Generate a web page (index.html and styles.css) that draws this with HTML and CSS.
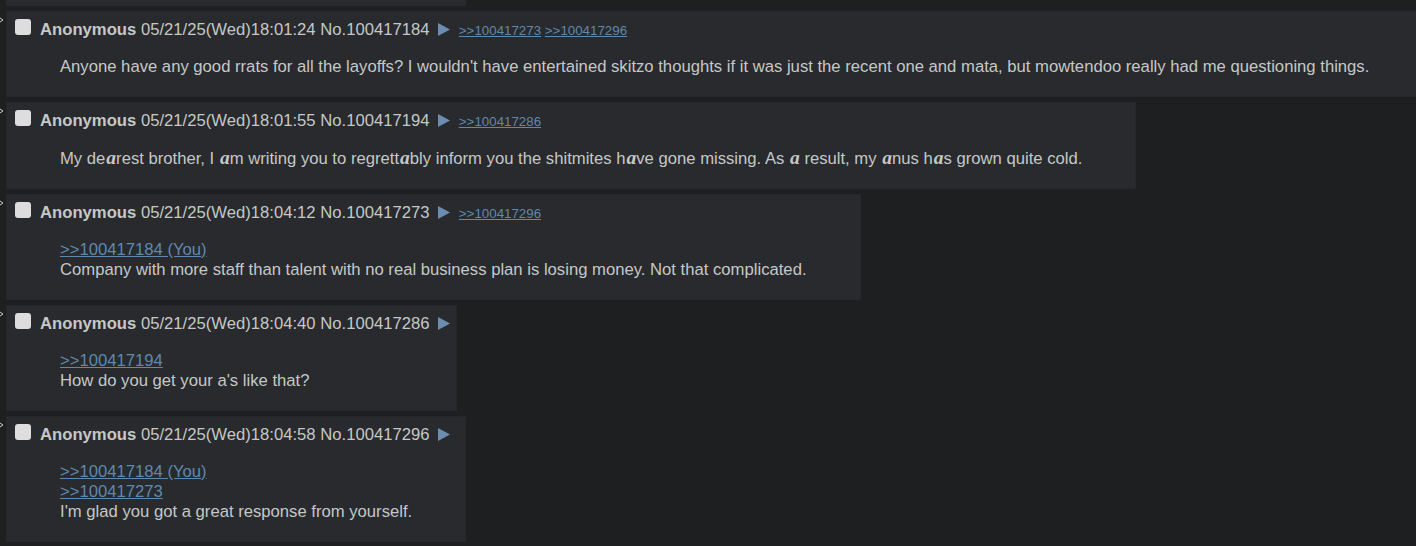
FILE: index.html
```html
<!DOCTYPE html>
<html lang="en">
<head>
    <meta charset="UTF-8">
    <title>Thread</title>
    <link rel="stylesheet" href="styles.css">
</head>
<body>
    <div class="thread">
        <div class="post-cut"></div>

        <div class="post-row">
            <div class="side-arrows"><svg width="5" height="6" viewBox="0 0 5 6"><polyline points="0,1 3,3 0,5" fill="none" stroke="#c5c8c6" stroke-width="1"/></svg></div>
            <div class="reply reply-wide">
                <div class="post-info">
                    <input type="checkbox" class="post-check"><span class="name">Anonymous</span> <span class="date">05/21/25(Wed)18:01:24</span> <span class="post-num">No.100417184</span>
                    <svg class="menu-btn" width="14" height="15" viewBox="0 0 14 15"><polygon points="1,1 13,7.5 1,14" fill="#6b8db2"/></svg>
                    <span class="backlinks"><a href="#p100417273">&gt;&gt;100417273</a> <a href="#p100417296">&gt;&gt;100417296</a></span>
                </div>
                <blockquote class="message">Anyone have any good rrats for all the layoffs? I wouldn't have entertained skitzo thoughts if it was just the recent one and mata, but mowtendoo really had me questioning things.</blockquote>
            </div>
        </div>

        <div class="post-row">
            <div class="side-arrows"><svg width="5" height="6" viewBox="0 0 5 6"><polyline points="0,1 3,3 0,5" fill="none" stroke="#c5c8c6" stroke-width="1"/></svg></div>
            <div class="reply">
                <div class="post-info">
                    <input type="checkbox" class="post-check"><span class="name">Anonymous</span> <span class="date">05/21/25(Wed)18:01:55</span> <span class="post-num">No.100417194</span>
                    <svg class="menu-btn" width="14" height="15" viewBox="0 0 14 15"><polygon points="1,1 13,7.5 1,14" fill="#6b8db2"/></svg>
                    <span class="backlinks"><a href="#p100417286">&gt;&gt;100417286</a></span>
                </div>
                <blockquote class="message">My de<span class="fancy">a</span>rest brother, I <span class="fancy">a</span>m writing you to regrett<span class="fancy">a</span>bly inform you the shitmites h<span class="fancy">a</span>ve gone missing. As <span class="fancy">a</span> result, my <span class="fancy">a</span>nus h<span class="fancy">a</span>s grown quite cold.</blockquote>
            </div>
        </div>

        <div class="post-row">
            <div class="side-arrows"><svg width="5" height="6" viewBox="0 0 5 6"><polyline points="0,1 3,3 0,5" fill="none" stroke="#c5c8c6" stroke-width="1"/></svg></div>
            <div class="reply">
                <div class="post-info">
                    <input type="checkbox" class="post-check"><span class="name">Anonymous</span> <span class="date">05/21/25(Wed)18:04:12</span> <span class="post-num">No.100417273</span>
                    <svg class="menu-btn" width="14" height="15" viewBox="0 0 14 15"><polygon points="1,1 13,7.5 1,14" fill="#6b8db2"/></svg>
                    <span class="backlinks"><a href="#p100417296">&gt;&gt;100417296</a></span>
                </div>
                <blockquote class="message"><a class="quotelink" href="#p100417184">&gt;&gt;100417184 (You)</a><br>Company with more staff than talent with no real business plan is losing money. Not that complicated.</blockquote>
            </div>
        </div>

        <div class="post-row">
            <div class="side-arrows"><svg width="5" height="6" viewBox="0 0 5 6"><polyline points="0,1 3,3 0,5" fill="none" stroke="#c5c8c6" stroke-width="1"/></svg></div>
            <div class="reply">
                <div class="post-info">
                    <input type="checkbox" class="post-check"><span class="name">Anonymous</span> <span class="date">05/21/25(Wed)18:04:40</span> <span class="post-num">No.100417286</span>
                    <svg class="menu-btn" width="14" height="15" viewBox="0 0 14 15"><polygon points="1,1 13,7.5 1,14" fill="#6b8db2"/></svg>
                </div>
                <blockquote class="message"><a class="quotelink" href="#p100417194">&gt;&gt;100417194</a><br>How do you get your a's like that?</blockquote>
            </div>
        </div>

        <div class="post-row">
            <div class="side-arrows"><svg width="5" height="6" viewBox="0 0 5 6"><polyline points="0,1 3,3 0,5" fill="none" stroke="#c5c8c6" stroke-width="1"/></svg></div>
            <div class="reply">
                <div class="post-info">
                    <input type="checkbox" class="post-check"><span class="name">Anonymous</span> <span class="date">05/21/25(Wed)18:04:58</span> <span class="post-num">No.100417296</span>
                    <svg class="menu-btn" width="14" height="15" viewBox="0 0 14 15"><polygon points="1,1 13,7.5 1,14" fill="#6b8db2"/></svg>
                </div>
                <blockquote class="message"><a class="quotelink" href="#p100417184">&gt;&gt;100417184 (You)</a><br><a class="quotelink" href="#p100417273">&gt;&gt;100417273</a><br>I'm glad you got a great response from yourself.</blockquote>
            </div>
        </div>
    </div>
</body>
</html>
```

FILE: styles.css
```css
html {
    overflow: hidden;
}
body {
    margin: 0;
    background-color: #1d1f21;
    color: #c5c8c6;
    font-family: "Liberation Sans", Arial, sans-serif;
    font-size: 16.67px;
    line-height: 20px;
}
a {
    color: #5f89ac;
}
.post-cut {
    width: 460px;
    height: 6px;
    margin-left: 6px;
    background-color: #282a2e;
}
.post-row {
    display: flex;
    align-items: flex-start;
    margin-top: 5px;
}
.side-arrows {
    width: 6px;
    flex-shrink: 0;
    line-height: 0;
    margin-top: 6px;
}
.reply {
    background-color: #282a2e;
    border: 1px solid #25272b;
    padding: 8px 2px 0 2px;
}
.reply-wide {
    width: max-content;
    flex-shrink: 0;
}
.post-info {
    white-space: nowrap;
    height: 20px;
}
.post-check {
    appearance: none;
    -webkit-appearance: none;
    width: 16px;
    height: 16px;
    margin: -1px 9px 0 6px;
    background-color: #dddddd;
    border-radius: 3px;
    vertical-align: top;
}
.name {
    font-weight: bold;
}
.menu-btn {
    vertical-align: top;
    margin: 2px 3px 0 3px;
}
.backlinks {
    font-size: 13.33px;
}
.message {
    margin: 17px 51px 19px 51px;
}
.quotelink {
    text-decoration: underline;
}
.fancy {
    font-family: "Liberation Serif", "Times New Roman", serif;
    font-weight: bold;
    font-style: italic;
    font-size: 19.5px;
    line-height: 1;
    padding-left: 1px;
}
```
